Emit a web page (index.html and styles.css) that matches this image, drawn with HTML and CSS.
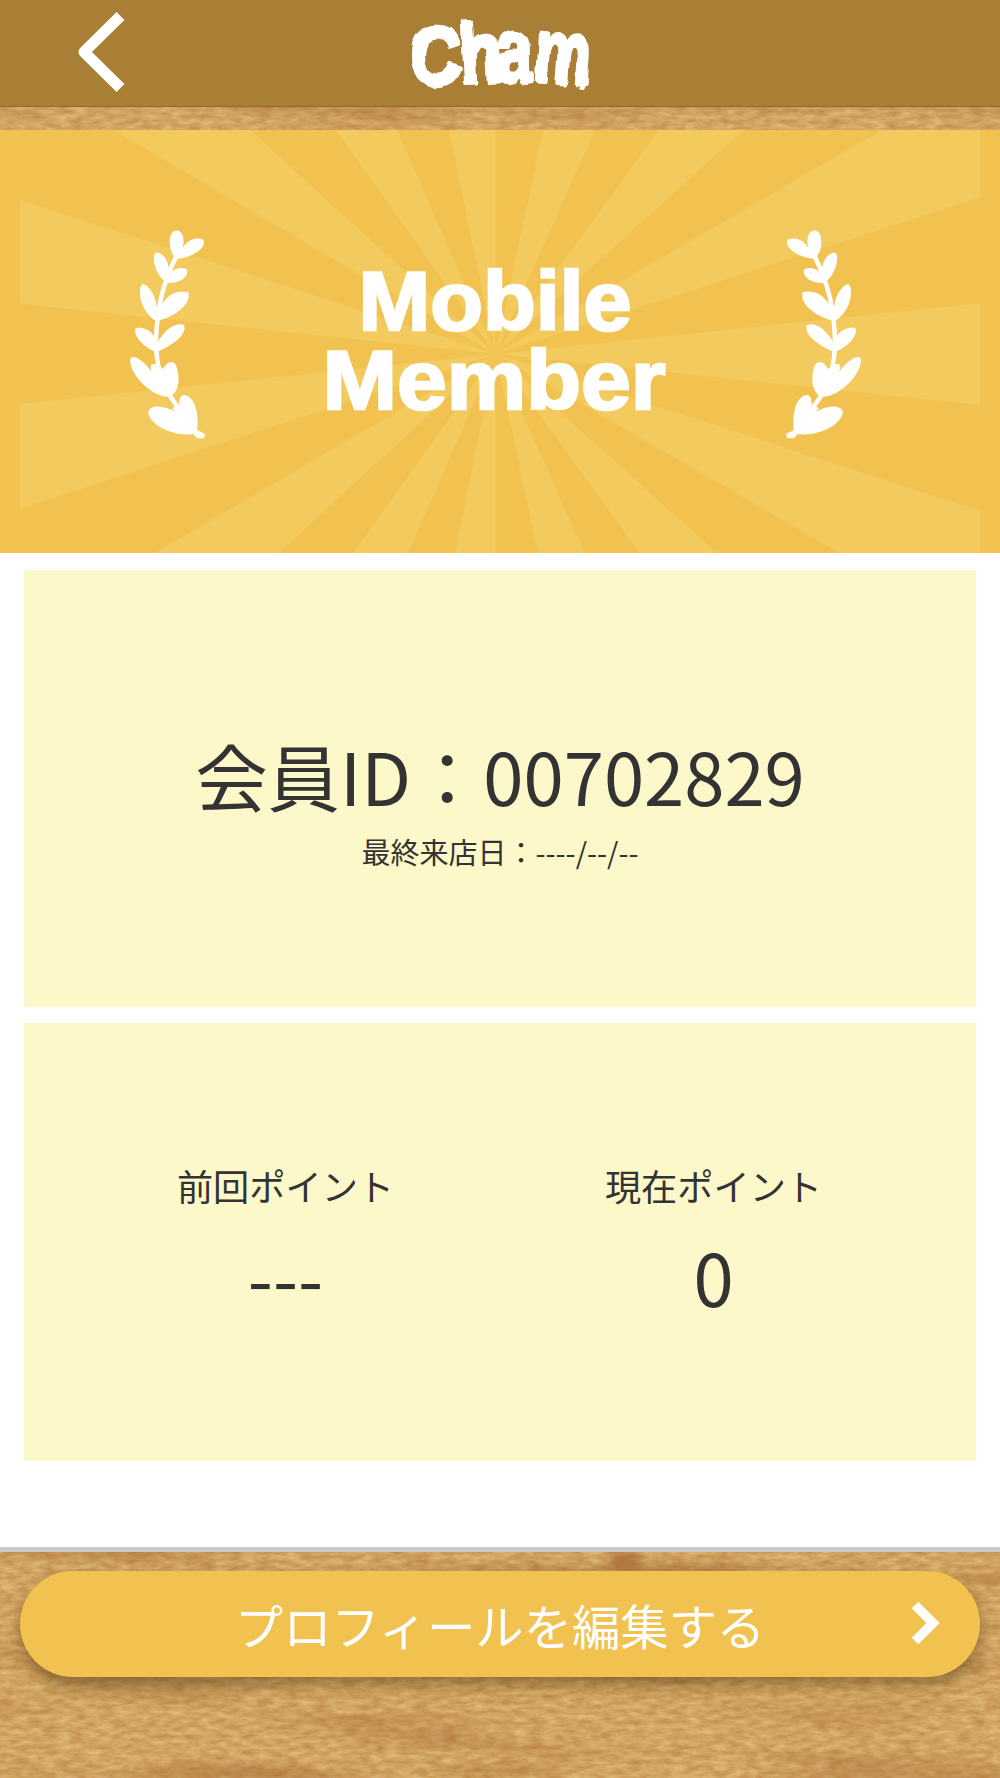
FILE: index.html
```html
<!DOCTYPE html>
<html lang="ja">
<head>
<meta charset="utf-8">
<title>Mobile Member</title>
<link rel="stylesheet" href="styles.css">
</head>
<body>
<svg class="wood" width="1000" height="1778" aria-hidden="true">
  <defs>
    <filter id="grain" x="0" y="0" width="100%" height="100%" color-interpolation-filters="sRGB">
      <feTurbulence type="fractalNoise" baseFrequency="0.07 0.2" numOctaves="4" seed="8"/>
      <feColorMatrix values="0.19 0 0 0 0.725  0.25 0 0 0 0.52  0.27 0 0 0 0.25  0 0 0 0 1"/>
    </filter>
    <filter id="bands" x="0" y="0" width="100%" height="100%" color-interpolation-filters="sRGB">
      <feTurbulence type="fractalNoise" baseFrequency="0.004 0.025" numOctaves="5" seed="5"/>
      <feColorMatrix values="0 0 0 0 0.66  0 0 0 0 0.43  0 0 0 0 0.22  1.4 0 0 0 -0.68"/>
    </filter>
    <filter id="soft" x="-30%" y="-60%" width="160%" height="220%">
      <feGaussianBlur stdDeviation="4"/>
    </filter>
  </defs>
  <rect width="1000" height="1778" filter="url(#grain)"/>
  <rect width="1000" height="1778" filter="url(#bands)"/>
  <g fill="#a46b36" opacity=".7" filter="url(#soft)">
    <ellipse cx="625" cy="1560" rx="16" ry="10"/>
    <ellipse cx="1000" cy="1579" rx="42" ry="4"/>
    <ellipse cx="680" cy="1571" rx="80" ry="3"/>
    <ellipse cx="230" cy="1772" rx="90" ry="4"/>
    <ellipse cx="500" cy="1770" rx="70" ry="3"/>
  </g>
</svg>
<div class="page">
  <header class="header">
    <svg class="back" viewBox="0 0 50 84" aria-label="戻る"><path d="M44.500 6 8 42l36.500 36"/></svg>
    <svg class="logo" viewBox="0 0 200 107" role="img" aria-label="Cham">
      <defs>
        <filter id="brush" x="-5%" y="-10%" width="110%" height="120%">
          <feTurbulence type="fractalNoise" baseFrequency="0.05" numOctaves="1" seed="4"/>
          <feDisplacementMap in="SourceGraphic" scale="8" xChannelSelector="R" yChannelSelector="G"/>
        </filter>
      </defs>
      <g class="logo-text" filter="url(#brush)">
        <text transform="translate(10 84) scale(.86 1)" font-size="82">C</text>
        <text transform="translate(61 84) rotate(-3) scale(.8 1)" font-size="87">h</text>
        <text transform="translate(95 82) scale(.74 1)" font-size="92">a</text>
        <text transform="translate(133 81) rotate(4) scale(.7 1)" font-size="90">m</text>
        <path d="M183 76q1 7-3 14"/>
      </g>
    </svg>
  </header>
  <main>
    <section class="banner">
      <svg viewBox="0 130 1000 423" width="1000" height="423">
        <defs>
          <g id="sprig">
            <path d="M176 257C162 285 157 310 156 340c0 25 5 42 16 59l24 33 8 4-6 0-24-29" fill="none" stroke="#fff" stroke-width="4.500"/>
            <path d="M176 259c-9-9-8-28 0-28.500 8 0 9 11 6 19 4-9 13-13 21-10 5 6-8 18-27 19.500z"/>
            <path d="M168 283c-13-5-18-30-11-30.500 8 1 13 12 12 22 5-7 14-8 18-5 2 8-8 14-19 13.500z"/>
            <path d="M156 321c-17-10-19-35-13-37 9 3 15 17 14 31 6-18 17-26 31-23 5 11-14 26-32 29z"/>
            <path d="M157 352c-17-5-25-21-21-24 9-2 20 5 21 16 7-14 18-22 27-19 4 10-13 21-27 27z"/>
            <path d="M169 397c-20-1-39-24-39-37 2-8 14 1 22 12-4-10 2-10 11-3 4-8 10-9 13-4 5 13 3 28-7 32z"/>
            <path d="M195 434c-23 3-45-9-47-22 4-10 21-5 33 3-3-13-2-20 4-20 12 3 14 24 12 37z"/>
          </g>
        </defs>
        <path class="rays" d="M495.5 354 113.5 130H250zM495.5 354 336 130H397zM495.5 354 449 130H495.5zM495.5 354 543 130H595zM495.5 354 659 130H743.6zM495.5 354 882 130H980V197.3zM495.5 354 980 303.3V405zM495.5 354 980 510.7V553.5H840.5zM495.5 354 717.5 553.5H640zM495.5 354 585 553.5H538zM495.5 354V553.5H455zM495.5 354 408 553.5H353zM495.5 354 278 553.5H154zM495.5 354 20 508.7V404zM495.5 354 20 303.7V199.7z"/>
        <use href="#sprig" fill="#fff"/>
        <use href="#sprig" fill="#fff" transform="translate(991 0) scale(-1 1)"/>
        <g class="banner-text">
          <text x="358.500" y="329.500" textLength="273" lengthAdjust="spacingAndGlyphs">Mobile</text>
          <text x="322.500" y="409" textLength="343" lengthAdjust="spacingAndGlyphs">Member</text>
        </g>
      </svg>
    </section>
    <section class="cards">
      <div class="card card-id">
        <p class="big">会員ID：00702829</p>
        <p class="visit">最終来店日：----/--/--</p>
      </div>
      <div class="card card-points">
        <div class="point"><p class="label">前回ポイント</p><p class="big">---</p></div>
        <div class="point"><p class="label">現在ポイント</p><p class="big">0</p></div>
      </div>
    </section>
  </main>
  <footer class="footer">
    <a class="edit">
      <span>プロフィールを編集する</span>
      <svg class="next" viewBox="0 0 30 44"><path d="M4 4l18 18L4 40"/></svg>
    </a>
  </footer>
</div>
</body>
</html>
```
FILE: styles.css
```css
* { box-sizing: border-box; margin: 0; padding: 0; }

body {
  width: 1000px;
  height: 1778px;
  overflow: hidden;
  background: #cfa05f;
  color: #333;
  font-family: "Noto Sans CJK JP", sans-serif;
}

.wood { position: absolute; top: 0; left: 0; z-index: -1; }

.page { display: flex; flex-direction: column; height: 1778px; }

.header {
  display: grid;
  grid-template-columns: 400px 200px 400px;
  height: 107px;
  background: #a97f35;
  border-bottom: 1px solid #8f6a35;
}

.back {
  width: 50px;
  height: 84px;
  margin: 10px 0 0 76px;
  fill: none;
  stroke: #fff;
  stroke-width: 11;
  stroke-linejoin: round;
}

.logo { width: 200px; height: 107px; overflow: visible; }

.logo-text {
  font-family: "Liberation Sans", sans-serif;
  font-weight: bold;
  fill: #fff;
  stroke: #fff;
  stroke-width: 4.5;
  stroke-linejoin: round;
}

main {
  margin-top: 23px;
  height: 1417px;
  background: #fff;
}

.banner { height: 423px; background: #f1c24f; }
.banner svg { display: block; }
.rays { fill: #f3ca5d; }

.banner-text {
  font: bold 82.5px "Liberation Sans", sans-serif;
  fill: #fff;
  stroke: #fff;
  stroke-width: 2.5;
}

.cards {
  display: flex;
  flex-direction: column;
  gap: 16px;
  padding: 17px 24px 0;
}

.card { height: 437px; background: #fdf8ca; text-align: center; }
.card + .card { height: 438px; }
.card-id { padding-top: 152.5px; }
.card-points { display: flex; padding: 136px 48.5px 0 47.5px; }
.point { flex: 1; }

.big { font-size: 72.4px; line-height: 104px; }
.visit { margin-top: 3.5px; font-size: 29px; line-height: 42px; }
.label { margin-bottom: 13px; font-size: 36.2px; line-height: 52px; }

.footer {
  flex: 1;
  padding: 19px 20px 0;
  border-top: 5px solid #c8c8c8;
}

.edit {
  display: grid;
  grid-template-columns: 1fr 770px 1fr;
  align-items: center;
  height: 106px;
  border-radius: 53px;
  background: #f1c24f;
  box-shadow: 0 8px 16px rgba(80, 60, 20, .5);
  color: #fff;
  font-size: 48.3px;
  line-height: 106px;
  text-align: center;
}

.edit span { grid-column: 2; height: 106px; }

.next {
  width: 30px;
  height: 44px;
  margin-left: 26px;
  margin-top: -2px;
  overflow: visible;
  fill: none;
  stroke: #fff;
  stroke-width: 9.5;
}
```
